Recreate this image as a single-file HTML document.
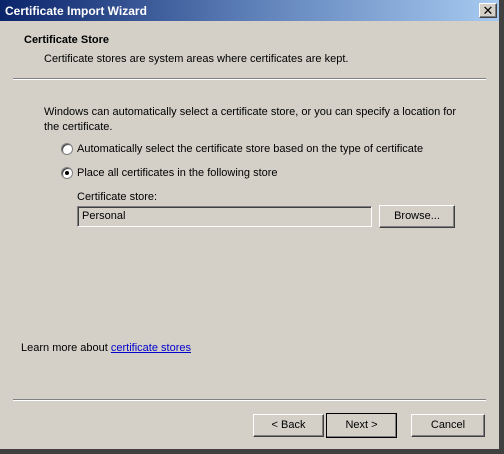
<!DOCTYPE html>
<html><head><style>
body{margin:0;width:504px;height:454px;overflow:hidden;background:#fff;font-family:"Liberation Sans",sans-serif;font-size:11px;color:#000}
.win{position:absolute;left:0;top:0;width:499px;height:449px;background:#d4d0c8;border-right:5px solid #404040;border-bottom:5px solid #404040;box-sizing:content-box}
.t{position:absolute;white-space:nowrap}
.title{position:absolute;left:0;top:0;width:499px;height:21px;background:linear-gradient(90deg,#0a246a,#5d7fb8 50%,#a6caf0)}
.btn{position:absolute;height:23px;background:#d4d0c8;box-sizing:border-box;border:1px solid;border-color:#fff #404040 #404040 #fff;box-shadow:inset -1px -1px #808080;text-align:center;line-height:21px}
.sep{position:absolute;height:0;border-top:1px solid #808080;border-bottom:1px solid #fff}
.radio{position:absolute;width:12px;height:12px;border-radius:50%;background:#fff;border:1px solid #808080;box-sizing:border-box;box-shadow:inset 1px 1px #404040}
</style></head><body>
<div class="win">
<div class="title"></div>
<div class="t" style="left:5px;top:4px;color:#fff;font-weight:bold;font-size:12px">Certificate Import Wizard</div>
<div class="btn" style="left:479px;top:3px;width:18px;height:15px;line-height:13px;font-size:13px">✕</div>
<div class="t" style="left:24px;top:34px;font-weight:bold">Certificate Store</div>
<div class="t" style="left:44px;top:53px">Certificate stores are system areas where certificates are kept.</div>
<div class="sep" style="left:13px;top:78px;width:473px"></div>
<div class="t" style="left:44px;top:105px;line-height:15px">Windows can automatically select a certificate store, or you can specify a location for<br>the certificate.</div>
<div class="radio" style="left:61px;top:143px"></div>
<div class="t" style="left:77px;top:143px">Automatically select the certificate store based on the type of certificate</div>
<div class="radio" style="left:61px;top:167px"><div style="position:absolute;left:3px;top:3px;width:4px;height:4px;border-radius:50%;background:#000"></div></div>
<div class="t" style="left:77px;top:167px">Place all certificates in the following store</div>
<div class="t" style="left:77px;top:191px">Certificate store:</div>
<div style="position:absolute;left:77px;top:206px;width:295px;height:21px;box-sizing:border-box;border:1px solid;border-color:#808080 #fff #fff #808080;box-shadow:inset 1px 1px #404040;background:#d4d0c8"></div>
<div class="t" style="left:82px;top:210px">Personal</div>
<div class="btn" style="left:379px;top:205px;width:76px">Browse...</div>
<div class="t" style="left:21px;top:342px">Learn more about <span style="color:#0000cc;text-decoration:underline">certificate stores</span></div>
<div class="sep" style="left:13px;top:399px;width:473px"></div>
<div class="btn" style="left:253px;top:414px;width:71px">&lt; Back</div>
<div class="btn" style="left:326px;top:413px;width:71px;height:25px;border:1px solid #000;line-height:23px">Next &gt;</div>
<div class="btn" style="left:411px;top:414px;width:74px">Cancel</div>
</div>
</body></html>
